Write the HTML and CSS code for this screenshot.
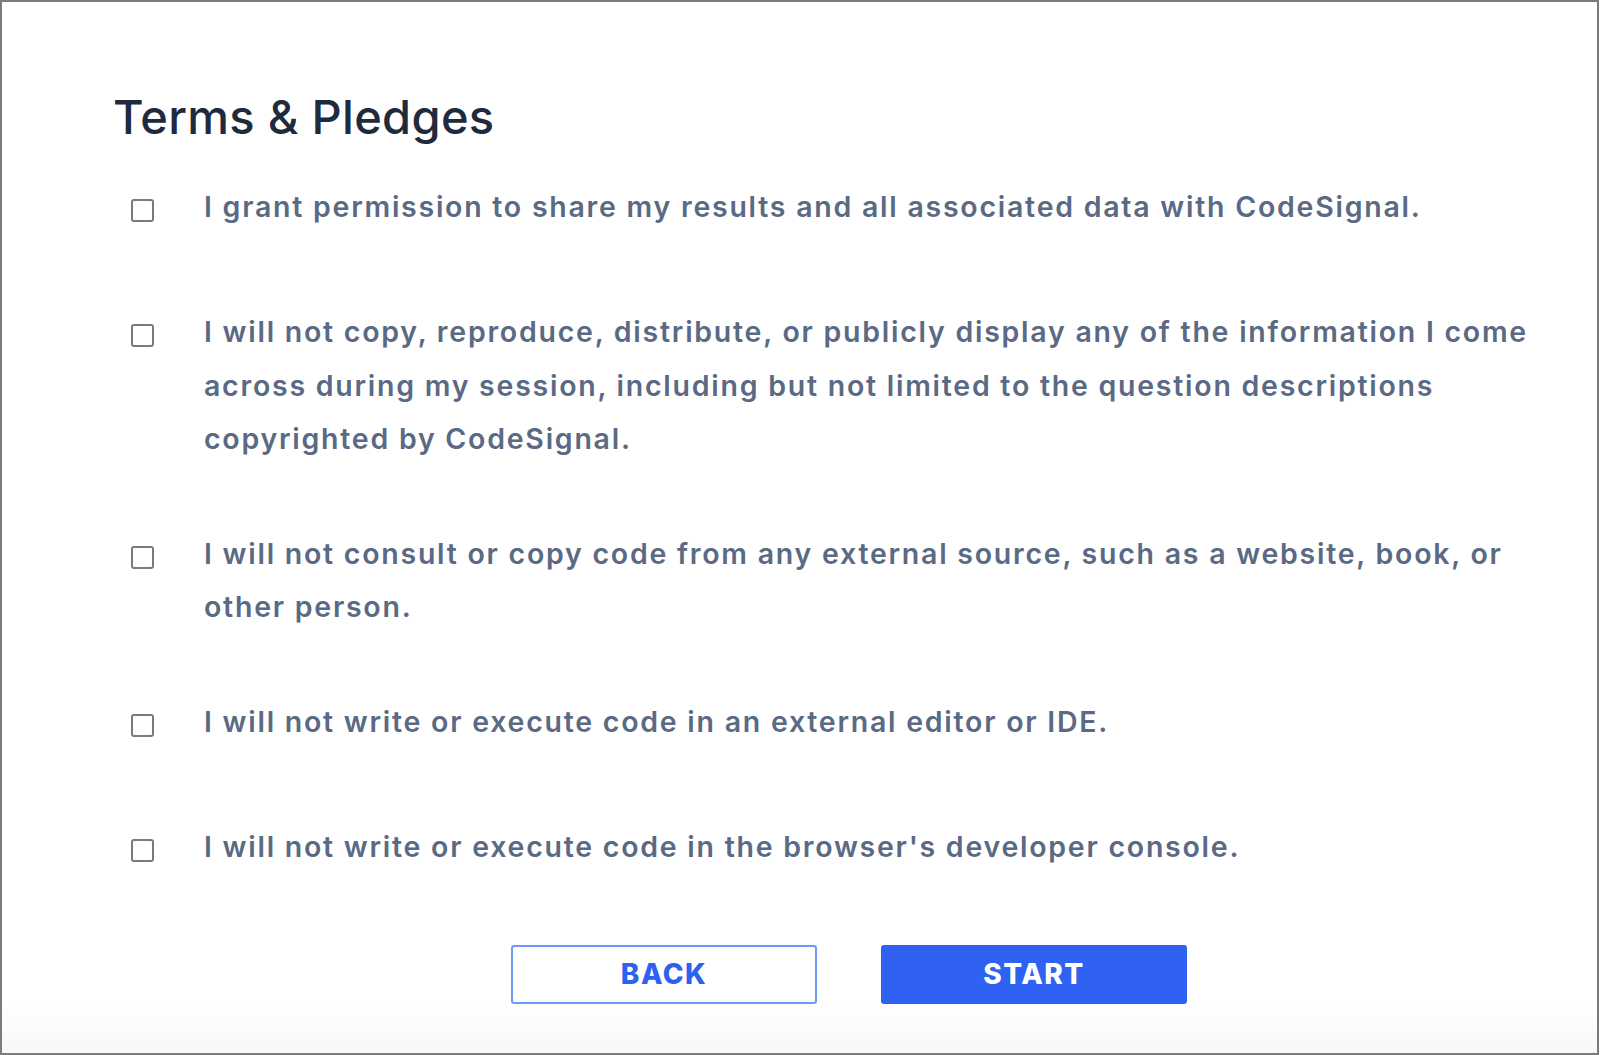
FILE: index.html
```html
<!DOCTYPE html>
<html>
<head>
    <title>Terms &amp; Pledges</title>
    <link rel="stylesheet" href="styles.css">
</head>
<body>
    <div class="frame">
        <div class="container">
            <h1>Terms &amp; Pledges</h1>

            <label class="pledge single">
                <span class="checkbox"></span>
                <span class="pledge-text">I grant permission to share my results and all associated data with CodeSignal.</span>
            </label>

            <label class="pledge">
                <span class="checkbox"></span>
                <span class="pledge-text">I will not copy, reproduce, distribute, or publicly display any of the information I come across during my session, including but not limited to the question descriptions copyrighted by CodeSignal.</span>
            </label>

            <label class="pledge">
                <span class="checkbox"></span>
                <span class="pledge-text">I will not consult or copy code from any external source, such as a website, book, or other person.</span>
            </label>

            <label class="pledge single">
                <span class="checkbox"></span>
                <span class="pledge-text">I will not write or execute code in an external editor or IDE.</span>
            </label>

            <label class="pledge single">
                <span class="checkbox"></span>
                <span class="pledge-text">I will not write or execute code in the browser's developer console.</span>
            </label>

            <div class="actions">
                <button class="button button-outline">BACK</button>
                <button class="button button-primary">START</button>
            </div>
        </div>
    </div>
</body>
</html>
```

FILE: styles.css
```css
body {
    margin: 0;
    font-family: Inter, Lato, sans-serif;
    background: #ffffff;
}
.frame {
    box-sizing: border-box;
    height: 1055px;
    width: 1599px;
    border: 2px solid #7b7b7b;
    background: linear-gradient(to bottom, #ffffff 0, #ffffff 1000px, #f7f7f7 1055px);
}
.container {
    padding: 82px 40px 0 111px;
}
h1 {
    margin: 0 0 30px 0;
    font-size: 47px;
    font-weight: 500;
    line-height: 66px;
    color: #1e2a3d;
    letter-spacing: 0.3px;
}
.pledge {
    display: flex;
    align-items: flex-start;
    margin-bottom: 61px;
    cursor: pointer;
}
.pledge.single {
    min-height: 64px;
}
.checkbox {
    flex: none;
    box-sizing: border-box;
    width: 23px;
    height: 23px;
    margin: 19px 50px 0 18px;
    border: 2px solid #7a7a7a;
    border-radius: 3px;
}
.pledge-text {
    font-size: 28.5px;
    font-weight: 600;
    line-height: 53.5px;
    color: #5a6a84;
    letter-spacing: 1.75px;
}
.actions {
    display: flex;
    justify-content: center;
    gap: 64px;
    padding-left: 28px;
}
.button {
    box-sizing: border-box;
    width: 306px;
    height: 59px;
    border-radius: 3px;
    font-family: Inter, Lato, sans-serif;
    font-size: 28px;
    font-weight: 800;
    letter-spacing: 1.5px;
    cursor: pointer;
}
.button-outline {
    background: #ffffff;
    border: 2px solid #6f97fb;
    color: #2d62f0;
}
.button-primary {
    background: #2f62f2;
    border: none;
    color: #ffffff;
}
```
